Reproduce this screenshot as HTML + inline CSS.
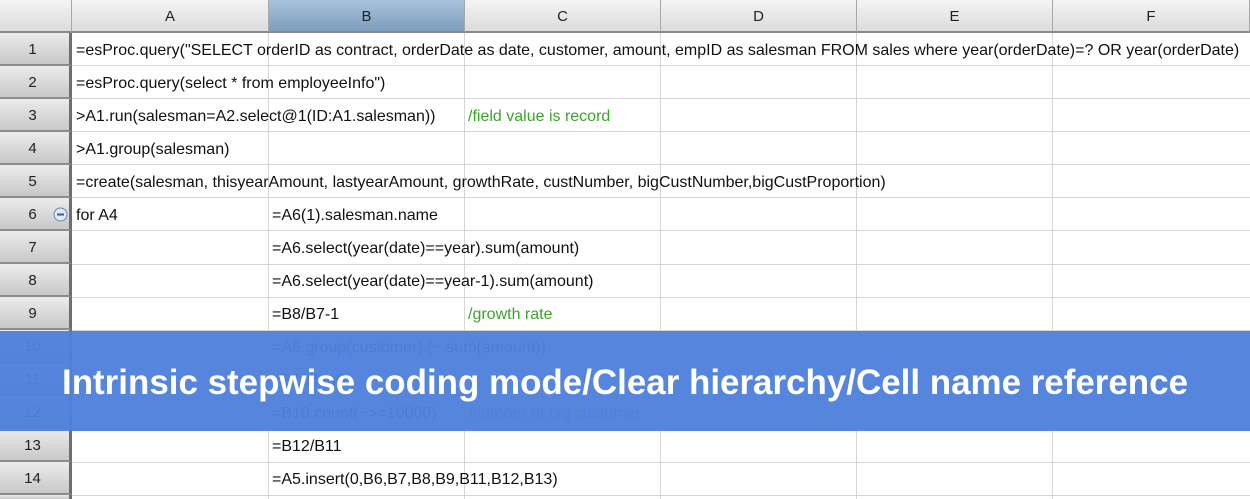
<!DOCTYPE html>
<html><head><meta charset="utf-8"><style>
*{margin:0;padding:0;box-sizing:border-box}
html,body{width:1250px;height:499px;overflow:hidden}
body{background:#fff;font-family:"Liberation Sans",Arial,sans-serif;position:relative}
.hdr{position:absolute;top:0;height:33px;background:linear-gradient(#f4f4f4,#dcdcdc);border-right:1px solid #a8a8a8;border-bottom:2px solid #8a8a8a;text-align:center;font-size:15px;line-height:33px;color:#222}
.hdr.sel{background:linear-gradient(#a9c3dc,#7d9dbd)}
.rh{position:absolute;left:0;width:72px;height:33px;background:linear-gradient(#ececec,#c8c8c8);border-bottom:2px solid #8c8c8c;border-right:3px solid #6e6e6e;text-align:center;font-size:15px;line-height:34px;color:#222;padding-right:4px}
.vl{position:absolute;top:33px;height:466px;width:1px;background:#d6d6d6}
.hl{position:absolute;left:72px;right:0;height:1px;background:#d6d6d6}
.t{position:absolute;font-size:16px;line-height:35px;white-space:nowrap;color:#111}
.g{color:#3aa52a}
.ov{position:absolute;left:0;top:331px;width:1250px;height:100px;background:rgba(78,128,220,0.96)}
</style></head><body>
<div class="hdr" style="left:0;width:72px"></div>
<div class="hdr" style="left:72px;width:197px">A</div>
<div class="hdr sel" style="left:269px;width:196px">B</div>
<div class="hdr" style="left:465px;width:196px">C</div>
<div class="hdr" style="left:661px;width:196px">D</div>
<div class="hdr" style="left:857px;width:196px">E</div>
<div class="hdr" style="left:1053px;width:197px">F</div>

<div class="vl" style="left:268px"></div><div class="vl" style="left:464px"></div><div class="vl" style="left:660px"></div><div class="vl" style="left:856px"></div><div class="vl" style="left:1052px"></div>
<div class="hl" style="top:65px"></div><div class="hl" style="top:98px"></div><div class="hl" style="top:131px"></div><div class="hl" style="top:164px"></div><div class="hl" style="top:197px"></div><div class="hl" style="top:230px"></div><div class="hl" style="top:264px"></div><div class="hl" style="top:297px"></div><div class="hl" style="top:330px"></div><div class="hl" style="top:363px"></div><div class="hl" style="top:396px"></div><div class="hl" style="top:429px"></div><div class="hl" style="top:462px"></div><div class="hl" style="top:495px"></div>

<div class="rh" style="top:33px">1</div><div class="rh" style="top:66px">2</div><div class="rh" style="top:99px">3</div><div class="rh" style="top:132px">4</div><div class="rh" style="top:165px">5</div><div class="rh" style="top:198px">6</div><div class="rh" style="top:231px">7</div><div class="rh" style="top:264px">8</div><div class="rh" style="top:297px">9</div><div class="rh" style="top:330px">10</div><div class="rh" style="top:363px">11</div><div class="rh" style="top:396px">12</div><div class="rh" style="top:429px">13</div><div class="rh" style="top:462px">14</div><div class="rh" style="top:495px;height:4px;border-bottom:0"></div>
<svg style="position:absolute;left:53px;top:207px" width="15" height="15"><circle cx="7.5" cy="7.5" r="6.5" fill="#dfe8f4" stroke="#6a86b0"/><rect x="4" y="6.5" width="7" height="2" fill="#3a5a90"/></svg>

<div class="t" style="left:76px;top:33px">=esProc.query("SELECT orderID as contract, orderDate as date, customer, amount, empID as salesman FROM sales where year(orderDate)=? OR year(orderDate)</div>
<div class="t" style="left:76px;top:66px">=esProc.query(select * from employeeInfo")</div>
<div class="t" style="left:76px;top:99px">&gt;A1.run(salesman=A2.select@1(ID:A1.salesman))</div>
<div class="t g" style="left:468px;top:99px">/field value is record</div>
<div class="t" style="left:76px;top:132px">&gt;A1.group(salesman)</div>
<div class="t" style="left:76px;top:165px">=create(salesman, thisyearAmount, lastyearAmount, growthRate, custNumber, bigCustNumber,bigCustProportion)</div>
<div class="t" style="left:76px;top:198px">for A4</div>
<div class="t" style="left:272px;top:198px">=A6(1).salesman.name</div>
<div class="t" style="left:272px;top:231px">=A6.select(year(date)==year).sum(amount)</div>
<div class="t" style="left:272px;top:264px">=A6.select(year(date)==year-1).sum(amount)</div>
<div class="t" style="left:272px;top:297px">=B8/B7-1</div>
<div class="t g" style="left:468px;top:297px">/growth rate</div>
<div class="t" style="left:272px;top:330px">=A6.group(customer).(~.sum(amount))</div>
<div class="t" style="left:272px;top:363px">=B10.len()</div>
<div class="t" style="left:272px;top:396px">=B10.count(~&gt;=10000)</div>
<div class="t g" style="left:468px;top:396px">/number of big customer</div>
<div class="t" style="left:272px;top:429px">=B12/B11</div>
<div class="t" style="left:272px;top:462px">=A5.insert(0,B6,B7,B8,B9,B11,B12,B13)</div>

<div class="ov"></div>
<svg style="position:absolute;left:0;top:331px" width="1250" height="100"><text x="62" y="63" textLength="1126" lengthAdjust="spacingAndGlyphs" font-family="Liberation Sans, sans-serif" font-weight="bold" font-size="35" fill="#fff">Intrinsic stepwise coding mode/Clear hierarchy/Cell name reference</text></svg>
</body></html>
